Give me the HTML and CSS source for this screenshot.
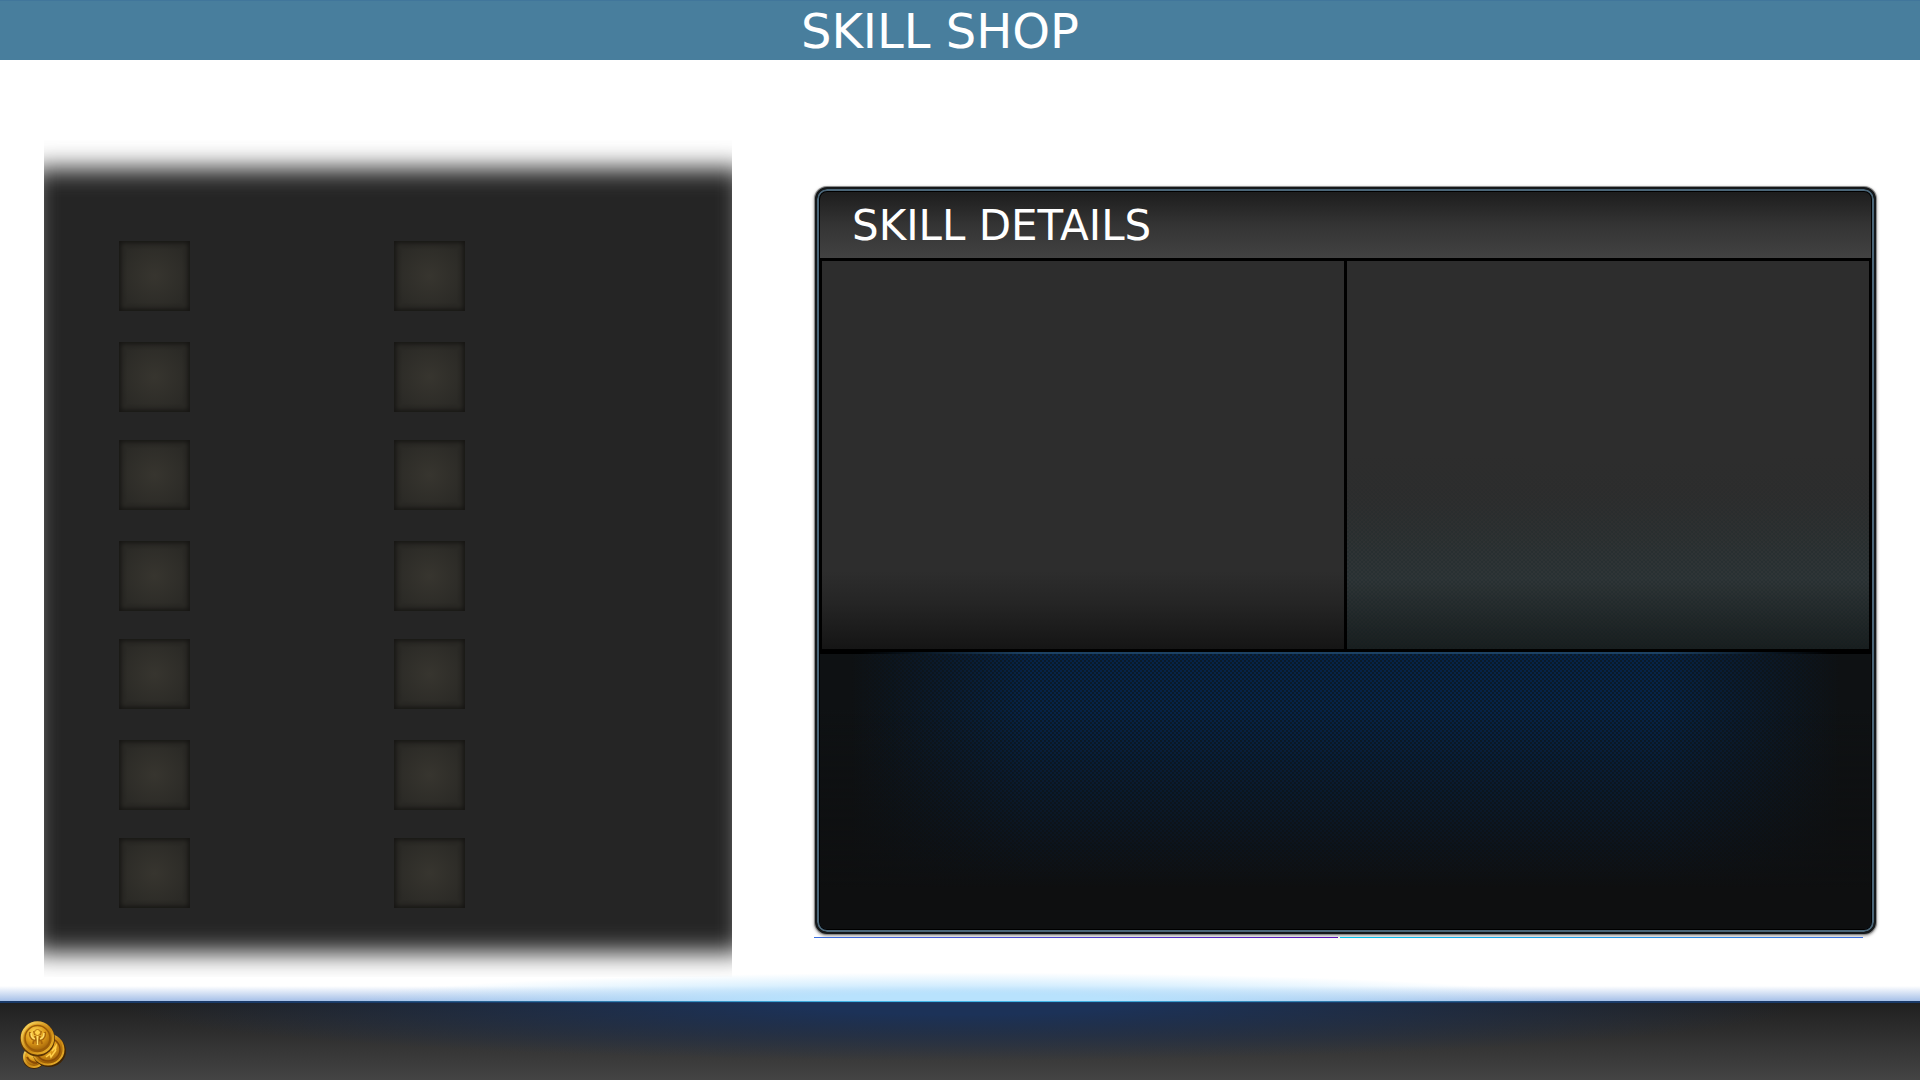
FILE: index.html
```html
<!DOCTYPE html>
<html lang="en">
<head>
<meta charset="utf-8">
<title>Skill Shop</title>
<link rel="stylesheet" href="styles.css">
</head>
<body>
<header class="topbar"><h1 class="title">SKILL SHOP</h1></header>
<main class="shop">
  <section class="skills">
    <ul class="slots">
      <li class="slot"></li><li class="slot"></li>
      <li class="slot"></li><li class="slot"></li>
      <li class="slot"></li><li class="slot"></li>
      <li class="slot"></li><li class="slot"></li>
      <li class="slot"></li><li class="slot"></li>
      <li class="slot"></li><li class="slot"></li>
      <li class="slot"></li><li class="slot"></li>
    </ul>
  </section>
  <section class="details">
    <div class="frame">
      <h2 class="details-title">SKILL DETAILS</h2>
      <div class="panes">
        <div class="pane"></div>
        <div class="pane pane-tinted"></div>
      </div>
      <div class="description"></div>
    </div>
    <div class="rules"><span class="rule rule-violet"></span><span class="rule rule-cyan"></span></div>
  </section>
</main>
<footer class="wallet">
  <svg class="coins" viewBox="0 0 48 50" width="48" height="50" role="img" aria-label="Coins">
    <defs>
      <radialGradient id="gold" cx="42%" cy="32%" r="68%">
        <stop offset="0" stop-color="#ffd752"/><stop offset=".5" stop-color="#dc9818"/><stop offset="1" stop-color="#8e5204"/>
      </radialGradient>
      <linearGradient id="rim" x1="0" y1="0" x2="1" y2="1">
        <stop offset="0" stop-color="#ffe26b"/><stop offset=".55" stop-color="#c98612"/><stop offset="1" stop-color="#f2bb30"/>
      </linearGradient>
    </defs>
    <ellipse cx="14" cy="38" rx="11" ry="10" fill="#422503"/>
    <ellipse cx="14" cy="36" rx="10" ry="10" fill="url(#gold)" stroke="url(#rim)" stroke-width="2"/>
    <path d="M7 36q3 6 10 6" fill="none" stroke="#8a4c05" stroke-width="2"/>
    <ellipse cx="29" cy="30" rx="17" ry="16" fill="#422503"/>
    <ellipse cx="28" cy="28.500" rx="15.500" ry="15" fill="url(#gold)" stroke="url(#rim)" stroke-width="2"/>
    <ellipse cx="28" cy="28.500" rx="12" ry="11.500" fill="none" stroke="#8a4c05" stroke-width="1.500"/>
    <path d="M26 36l4-3 1 3 5-7M32 30l4-5-1 6" fill="none" stroke="#ffd04a" stroke-width="1.500"/>
    <circle cx="17.500" cy="18" r="17.500" fill="#5a3304"/>
    <circle cx="17.500" cy="17" r="15.500" fill="url(#gold)" stroke="url(#rim)" stroke-width="2.500"/>
    <circle cx="17.500" cy="17" r="12.500" fill="none" stroke="#9a5b08" stroke-width="1.500"/>
    <path d="M10 11q-1 6 4 8l-1 4M25 11q1 6-4 8l1 4M15 15l2 8M20 15l-2 8M14 10l1 4M21 10l-1 4" fill="none" stroke="#a8650a" stroke-width="2"/>
    <path d="M11 12q0 5 4 6M24 12q0 5-4 6M17.500 15v9" fill="none" stroke="#ffde6a" stroke-width="1.500"/>
    <circle cx="17.500" cy="11.500" r="3" fill="#ffd24a" stroke="#b87410"/>
  </svg>
</footer>
</body>
</html>
```
FILE: styles.css
```css
* { box-sizing: border-box; }

body {
  margin: 0;
  min-height: 100vh;
  display: flex;
  flex-direction: column;
  background: #fff;
  font-family: "DejaVu Sans", sans-serif;
  color: #fff;
}

.topbar {
  height: 60px;
  padding-right: 40px;
  display: flex;
  align-items: center;
  justify-content: center;
  background: #487e9d;
  border-top: 1px solid #41769b;
}

.title, .details-title { margin: 0; font-weight: 400; line-height: 1; }
.title { font-size: 48px; }

.shop {
  flex: 1;
  display: grid;
  grid-template-columns: 688fr 1064fr;
  column-gap: 82px;
  align-items: start;
  padding: 80px 42px 24px 44px;
}

/* Skill grid: the dark sheet is blurred and cut off at the sides */
.skills {
  position: relative;
  overflow: hidden;
  padding: 101px 75px 38px;
}
.skills::before {
  content: "";
  position: absolute;
  inset: 28px -12px 24px;
  background: #252525;
  filter: blur(12px);
}
.slots {
  position: relative;
  list-style: none;
  margin: 0;
  padding: 0;
  display: grid;
  grid-template-columns: 275px 71px;
  grid-auto-rows: 101px 98px;
}
.slot {
  width: 71px;
  height: 70px;
  background: radial-gradient(circle, #37352f, #2b2a26 75%);
  box-shadow: inset 0 0 5px 2px #161513;
}

/* Skill details */
.details { padding-top: 47px; }
.frame {
  margin: 0 2px 0 1px;
  border: 2px solid #15181a;
  border-radius: 12px;
  background: #000;
  box-shadow: inset 0 0 0 2px #4b6678, 0 0 0 1px #8b8b8b, 0 1px 3px 1px #999;
  padding: 3px 5px;
}
.details-title {
  height: 66px;
  padding: 2px 32px 0;
  margin: 0 -2px 3px;
  display: flex;
  align-items: center;
  font-size: 42px;
  border-radius: 7px 7px 0 0;
  background: linear-gradient(#1d1d1d, #343434 50%, #424242);
}
.panes {
  display: grid;
  grid-template-columns: 1fr 1fr;
  gap: 3px;
}
.pane {
  height: 388px;
  background: linear-gradient(#2d2d2d 80%, #252525 88%, #151515);
}
.pane-tinted {
  background:
    linear-gradient(#2d2d2d 50%, #2d2d2d00 75%),
    repeating-conic-gradient(#0a202030 0 25%, #0000 0 50%) 0 0 / 4px 4px,
    linear-gradient(#2d2d2d 55%, #2f3537 82%, #191e1f);
}
.description {
  height: 277px;
  margin: 3px -2px 0;
  border-top: 2px solid;
  border-image: linear-gradient(90deg, #000 4%, #1d4263 20% 80%, #000 96%) 1;
  border-radius: 0 0 7px 7px;
  background:
    linear-gradient(#0e0f1000 20%, #0e0f10 85%),
    linear-gradient(90deg, #0e1113 3%, #0e111300 20% 80%, #0e1113 97%),
    repeating-conic-gradient(#0a1a28 0 25%, #06244a 0 50%) 0 0 / 4px 4px;
}
.rules {
  display: grid;
  grid-template-columns: 1fr 1fr;
  gap: 2px;
  padding: 3px 15px 0 0;
}
.rule { position: relative; height: 1px; }
.rule-violet { background: linear-gradient(90deg, #3b6fe0, #5a10b8); }
.rule-cyan { background: linear-gradient(90deg, #00c4f0, #3b6fe0); }

/* Wallet bar with its glow */
.wallet {
  position: relative;
  height: 79px;
  padding: 18px 20px 0;
  border-top: 2px solid #1a3a68;
  background:
    radial-gradient(ellipse 44% 75% at 50% 0, #1c3258 20%, #1c325800),
    linear-gradient(#202020, #444);
}
.wallet::before {
  content: "";
  position: absolute;
  inset: -32px 0 auto;
  height: 30px;
  background:
    radial-gradient(ellipse 32% 95% at 50% 100%, #b8e2fd 25%, #b8e2fd00),
    linear-gradient(#a6c0e800 50%, #a6c0e8);
}
.wallet::after {
  content: "";
  position: absolute;
  inset: -2px 0 auto;
  height: 1px;
  background: linear-gradient(90deg, #42a5dc00 15%, #42b5e6 45% 55%, #42a5dc00 85%);
}
.coins { display: block; }
```
